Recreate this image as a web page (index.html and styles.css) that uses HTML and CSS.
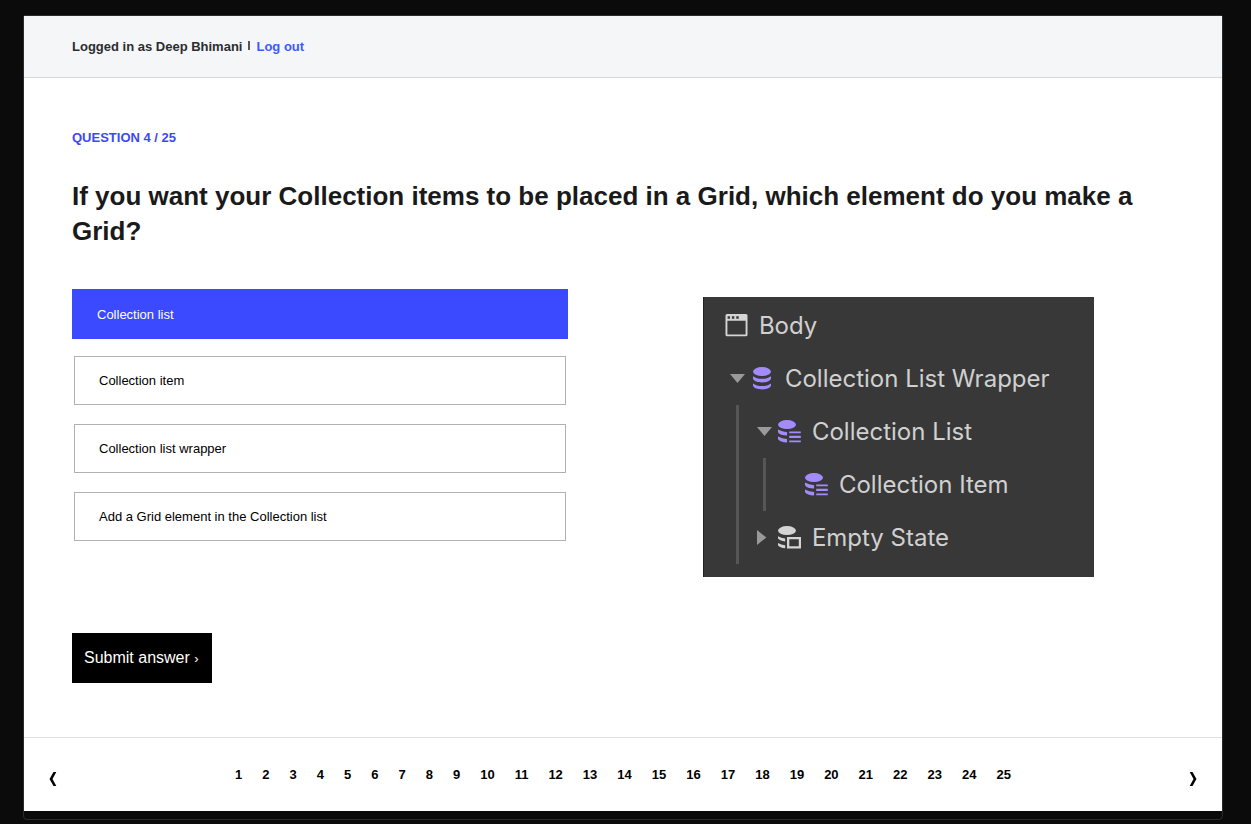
FILE: index.html
```html
<!DOCTYPE html>
<html lang="en">
<head>
<meta charset="utf-8">
<meta name="viewport" content="width=device-width, initial-scale=1">
<title>Question 4 / 25</title>
<link rel="stylesheet" href="styles.css">
</head>
<body>
<svg class="sprite" aria-hidden="true">
  <symbol id="window" viewBox="0 0 24 24">
    <path fill-rule="evenodd" d="M2 0H21Q22.500 0 22.500 1.500V20.800Q22.500 22.300 21 22.300H2Q.5 22.300 .5 20.800V1.500Q.5 0 2 0ZM2.400 6.800V20.400H20.600V6.800ZM2.600 2.300V4.700H5V2.300ZM6.900 2.300V4.700H9.300V2.300ZM11.300 2.300V4.700H13.700V2.300Z"/>
  </symbol>
  <symbol id="database" viewBox="0 0 24 24">
    <ellipse cx="11" cy="4.600" rx="9" ry="4.500"/>
    <path d="M2 9.200C6 12.600 16 12.600 20 9.200V11.800C18.500 16.700 3.500 16.700 2 11.800ZM2 16.400C6 19.800 16 19.800 20 16.400V18.800C18.500 23.600 3.500 23.600 2 18.800Z"/>
  </symbol>
  <symbol id="database-list" viewBox="0 0 24 24">
    <ellipse cx="9" cy="4.600" rx="9" ry="4.500"/>
    <path d="M0 9.600Q4 12 9.100 12.200V15.600Q2 15.400 0 12.200ZM0 16.400Q4 18.800 9.100 19V22.500Q2 22.300 0 19.200ZM11.200 11.400H22.800V13.200H11.200ZM11.200 15.700H22.800V17.900H11.200ZM11.200 20.400H22.800V22.200H11.200Z"/>
  </symbol>
  <symbol id="database-empty" viewBox="0 0 24 24">
    <ellipse cx="9" cy="4.600" rx="9" ry="4.500"/>
    <path fill-rule="evenodd" d="M0 10.300Q3 12.100 7.200 12.500V15.400Q2 15 0 12.600ZM0 17Q3 18.800 7.200 19.300V22.200Q2 21.800 0 19.200ZM9 11H23V22.400H9ZM11.300 13.200V20.200H20.800V13.200Z"/>
  </symbol>
  <symbol id="caret-down" viewBox="0 0 15 10"><path d="M0 0H15L7.500 9Z"/></symbol>
  <symbol id="caret-right" viewBox="0 0 10 15"><path d="M0 0V15L9.300 7.500Z"/></symbol>
</svg>

<div class="card">
  <header class="topbar">
    <span>Logged in as Deep Bhimani</span>
    <span class="divider"></span>
    <a class="logout" href="#logout">Log out</a>
  </header>

  <main class="content">
    <p class="counter">QUESTION 4 / 25</p>
    <h1 class="question">If you want your Collection items to be placed in a Grid, which element do you make a Grid?</h1>

    <form class="quiz">
      <div class="columns">
        <div class="options" role="radiogroup" aria-label="Answers">
          <label class="option"><input type="radio" name="answer" checked>Collection list</label>
          <label class="option"><input type="radio" name="answer">Collection item</label>
          <label class="option"><input type="radio" name="answer">Collection list wrapper</label>
          <label class="option"><input type="radio" name="answer">Add a Grid element in the Collection list</label>
        </div>

        <figure class="navigator">
          <ul class="tree">
            <li>
              <div class="node"><span class="toggle"></span><svg class="icon"><use href="#window"/></svg>Body</div>
              <ul class="branch">
                <li>
                  <div class="node"><span class="toggle"><svg class="down"><use href="#caret-down"/></svg></span><svg class="icon violet"><use href="#database"/></svg>Collection List Wrapper</div>
                  <ul class="branch guided">
                    <li>
                      <div class="node"><span class="toggle"><svg class="down"><use href="#caret-down"/></svg></span><svg class="icon violet"><use href="#database-list"/></svg>Collection List</div>
                      <ul class="branch guided">
                        <li><div class="node"><span class="toggle"></span><svg class="icon violet"><use href="#database-list"/></svg>Collection Item</div></li>
                      </ul>
                    </li>
                    <li><div class="node"><span class="toggle"><svg class="right"><use href="#caret-right"/></svg></span><svg class="icon"><use href="#database-empty"/></svg>Empty State</div></li>
                  </ul>
                </li>
              </ul>
            </li>
          </ul>
        </figure>
      </div>
      <button class="submit" type="submit">Submit answer <span class="chevron">›</span></button>
    </form>
  </main>

  <nav class="pager" aria-label="Questions">
    <a class="arrow" href="#3" aria-label="Previous question"><svg viewBox="0 0 8 14"><path d="M4.500 0H7.300L3.500 7L7.300 14H4.500L.5 7Z"/></svg></a>
    <div class="pages">
      <a href="#1">1</a><a href="#2">2</a><a href="#3">3</a><a href="#4">4</a><a href="#5">5</a>
      <a href="#6">6</a><a href="#7">7</a><a href="#8">8</a><a href="#9">9</a><a href="#10">10</a>
      <a href="#11">11</a><a href="#12">12</a><a href="#13">13</a><a href="#14">14</a><a href="#15">15</a>
      <a href="#16">16</a><a href="#17">17</a><a href="#18">18</a><a href="#19">19</a><a href="#20">20</a>
      <a href="#21">21</a><a href="#22">22</a><a href="#23">23</a><a href="#24">24</a><a href="#25">25</a>
    </div>
    <a class="arrow" href="#5" aria-label="Next question"><svg viewBox="0 0 8 14"><path d="M3.500 0H.7L4.500 7L.7 14H3.500L7.500 7Z"/></svg></a>
  </nav>
</div>
</body>
</html>
```

FILE: styles.css
```css
* { box-sizing: border-box; }

body {
  margin: 0;
  padding: 15px 28px 4px 23px;
  background: #0b0b0b;
  color: #1a1a1a;
  font-family: "Liberation Sans", Arial, sans-serif;
  font-size: 13px;
}

a { color: inherit; text-decoration: none; }

.sprite { display: none; }

.card {
  padding-bottom: 8px;
  border: 1px solid #2c2c2c;
  border-radius: 2px 2px 4px 4px;
}

.topbar {
  display: flex;
  align-items: center;
  height: 62px;
  padding: 0 48px;
  border-bottom: 1px solid #d5d7d9;
  background: #f5f6f8;
  color: #2b2c2f;
  font-weight: bold;
}

.divider {
  width: 2px;
  height: 9px;
  margin: 0 6px 2px;
  background: #55575a;
}

.logout { color: #3b5bfd; }

.content {
  padding: 52px 48px 54px;
  background: #fff;
}

.counter {
  margin: 0;
  color: #3b49f5;
  font-weight: bold;
  line-height: 16px;
}

.question {
  margin: 33px 0 40px;
  font-size: 26px;
  line-height: 35px;
}

.columns {
  display: grid;
  grid-template-columns: 45% 50%;
  justify-content: space-between;
}

.options {
  display: flex;
  flex-direction: column;
  gap: 19px;
}

.option {
  position: relative;
  display: flex;
  align-items: center;
  height: 49px;
  margin: 0 2px;
  padding: 0 24px;
  border: 1px solid #b1b1b5;
  color: #000;
}

.option input {
  position: absolute;
  inset: 0;
  margin: 0;
  appearance: none;
}

.option:has(input:checked) {
  height: 50px;
  margin: 0 0 -2px;
  border-color: #3b49ff;
  background: #3b49ff;
  color: #fff;
}

.navigator {
  width: 71%;
  margin: 8px auto 0;
  padding: 2px 0 13px;
  border-left: 1px solid #222;
  background: #383838;
  color: #d0d0d0;
  font-family: Inter, sans-serif;
  font-size: 24px;
}

.tree, .branch {
  margin: 0;
  padding: 0;
  list-style: none;
}

.branch { padding-left: 26px; }

.guided {
  margin-left: 6px;
  padding-left: 18px;
  border-left: 3px solid #565656;
}

.node {
  display: flex;
  align-items: center;
  height: 53px;
  white-space: nowrap;
}

.toggle {
  display: flex;
  width: 15px;
  margin-right: 6px;
  fill: #9a9a9a;
}

.down { width: 15px; height: 10px; }
.right { width: 10px; height: 15px; }

.icon {
  width: 24px;
  height: 24px;
  margin-right: 10px;
  fill: #d4d4d4;
}

.violet { fill: #a48bfb; }

.submit {
  min-width: 140px;
  height: 50px;
  margin-top: 56px;
  padding: 0 12px;
  border: 0;
  border-radius: 0;
  background: #000;
  color: #fff;
  font-family: inherit;
  font-size: 16px;
  text-align: left;
}

.chevron { font-size: 13px; }

.pager {
  display: flex;
  align-items: center;
  justify-content: space-between;
  height: 74px;
  padding: 0 25px;
  border-top: 1px solid #dfe0e2;
  background: #fff;
  color: #000;
}

.pages {
  display: flex;
  gap: 20px;
  font-weight: bold;
}

.arrow { padding-top: 9px; }

.arrow svg {
  display: block;
  width: 8px;
  height: 14px;
}
```
